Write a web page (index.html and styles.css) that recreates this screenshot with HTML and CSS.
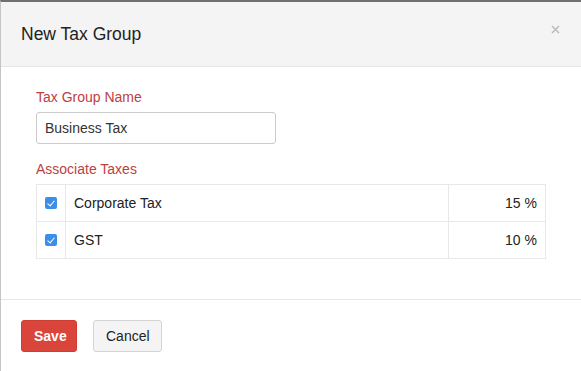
FILE: index.html
```html
<!DOCTYPE html>
<html lang="en">
<head>
    <meta charset="utf-8" />
    <title>New Tax Group</title>
    <link rel="stylesheet" href="styles.css">
</head>
<body>
    <div class="modal">
        <div class="modal-header">
            <h4 class="modal-title">New Tax Group</h4>
            <button class="close" type="button" aria-label="Close">
                <svg width="9" height="9" viewBox="0 0 9 9">
                    <path d="M1 1L8 8M8 1L1 8" stroke="#b8b8b8" stroke-width="1.4" fill="none" />
                </svg>
            </button>
        </div>

        <div class="modal-body">
            <label class="field-label">Tax Group Name</label>
            <input class="text-input" type="text" value="Business Tax">

            <label class="field-label taxes-label">Associate Taxes</label>
            <table class="tax-table">
                <tr>
                    <td class="check-cell"><span class="check"></span></td>
                    <td class="name-cell">Corporate Tax</td>
                    <td class="rate-cell">15 %</td>
                </tr>
                <tr>
                    <td class="check-cell"><span class="check"></span></td>
                    <td class="name-cell">GST</td>
                    <td class="rate-cell">10 %</td>
                </tr>
            </table>
        </div>

        <div class="modal-footer">
            <button class="btn btn-primary" type="button">Save</button>
            <button class="btn btn-default" type="button">Cancel</button>
        </div>
    </div>
</body>
</html>
```

FILE: styles.css
```css
* {
    margin: 0;
    padding: 0;
    box-sizing: border-box;
}

body {
    font-family: "Liberation Sans", Arial, sans-serif;
    font-size: 14px;
    color: #333;
    background: #fff;
}

.modal {
    width: 581px;
    height: 371px;
    border-top: 2px solid #707070;
    border-left: 1px solid #c4c4c4;
    background: #fff;
}

.modal-header {
    height: 65px;
    background: #f4f4f4;
    border-bottom: 1px solid #e6e6e6;
    display: flex;
    align-items: center;
    justify-content: space-between;
    padding: 0 20px 0 20px;
}

.modal-title {
    font-size: 17.5px;
    font-weight: normal;
    color: #222;
}

.close {
    background: none;
    border: none;
    margin-top: -10px;
    margin-right: 1px;
    display: flex;
}

.modal-body {
    padding: 20px 35px 40px 35px;
    border-bottom: 1px solid #e6e6e6;
}

.field-label {
    display: block;
    line-height: 20px;
    color: #c0403f;
    margin-bottom: 5px;
}

.taxes-label {
    margin-top: 15px;
}

.text-input {
    display: block;
    width: 240px;
    height: 32px;
    border: 1px solid #ccc;
    border-radius: 3px;
    padding: 0 8px;
    font-family: inherit;
    font-size: 14px;
    color: #333;
}

.tax-table {
    width: 510px;
    border-collapse: collapse;
}

.tax-table td {
    height: 37px;
    border: 1px solid #e8e8e8;
    color: #222;
}

.check-cell {
    width: 29px;
    text-align: center;
}

.name-cell {
    padding-left: 8px;
}

.rate-cell {
    width: 97px;
    text-align: right;
    padding-right: 8px;
}

.check {
    display: inline-block;
    width: 12px;
    height: 12px;
    border-radius: 2px;
    background: #3c8fe9;
    position: relative;
    vertical-align: middle;
    margin-top: -2px;
}

.check::after {
    content: '';
    position: absolute;
    left: 4px;
    top: 2px;
    width: 3px;
    height: 6px;
    border: solid #fff;
    border-width: 0 1.5px 1.5px 0;
    transform: rotate(40deg);
}

.modal-footer {
    display: flex;
    gap: 16px;
    padding: 20px 20px;
}

.btn {
    height: 32px;
    border-radius: 3px;
    font-family: inherit;
    font-size: 14px;
    padding: 0 12px;
}

.btn-primary {
    width: 56px;
    background: #d9453a;
    border: 1px solid #cf3d33;
    color: #fff;
    font-weight: bold;
}

.btn-default {
    width: 69px;
    background: #f4f4f4;
    border: 1px solid #d4d4d4;
    color: #222;
}
```
